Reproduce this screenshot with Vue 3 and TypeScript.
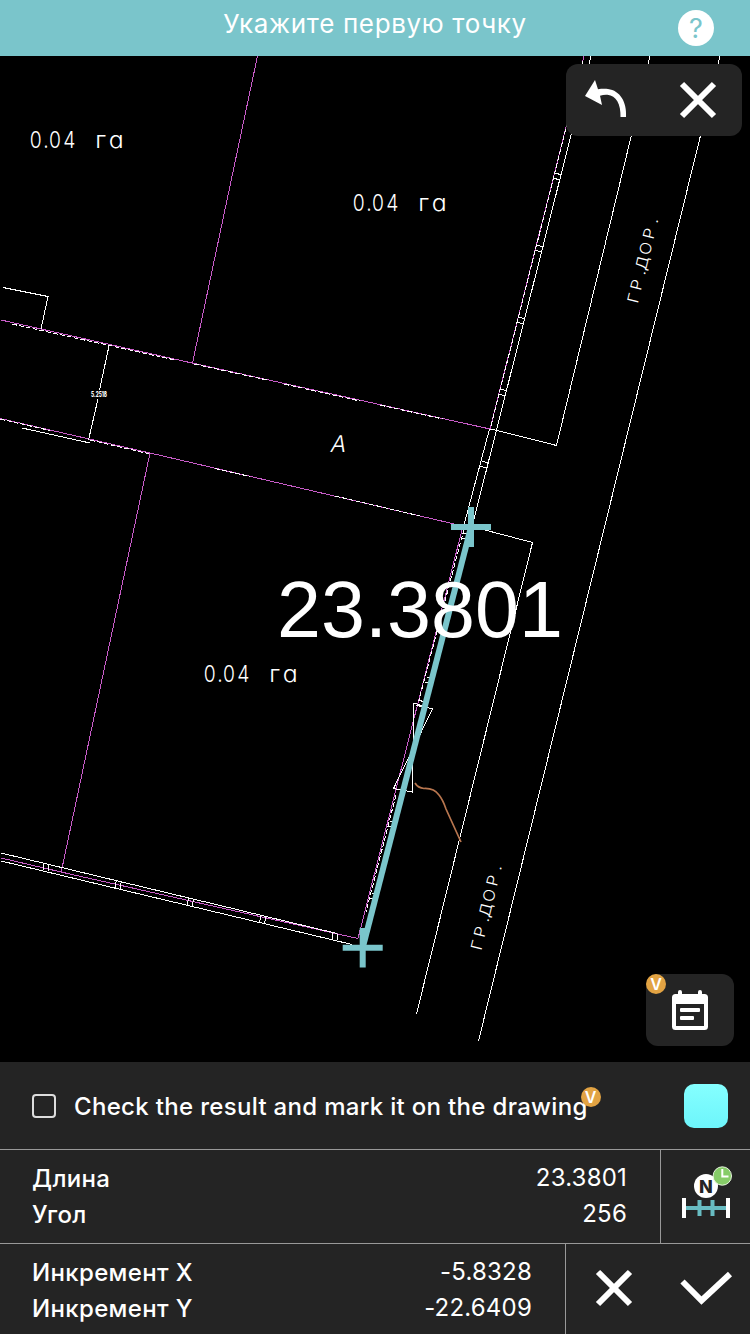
<template>
  <div class="screen">
    <header class="hint">
      <span class="hint-text">Укажите первую точку</span>
      <button class="help">?</button>
    </header>

    <main class="canvas">
      <svg class="drawing" viewBox="0 56 750 1006" width="750" height="1006">
        <g class="plot">
          <polyline v-for="(l, i) in parcelLines" :key="'p' + i" :points="l" />
        </g>
        <g class="white">
          <polyline v-for="(l, i) in whiteLines" :key="'w' + i" :points="l" />
          <path v-for="(p, i) in roadPosts" :key="'r' + i" :d="`M${p.x} ${p.y}l7 2M${p.x - 2} ${p.y + 5}l7 2`" />
          <path v-for="(p, i) in fencePosts" :key="'f' + i" :d="`M${p.x} ${p.y}l-1 7M${p.x + 5} ${p.y + 1}l-1 7`" />
        </g>
        <g class="dashed">
          <polyline v-for="(l, i) in dashedLines" :key="'d' + i" :points="l" />
        </g>
        <path class="slope" d="M415 783Q418 788 424 788.500Q434 788 439 795Q443 800 446 809L461 842" />

        <g class="cad">
          <g v-for="(a, i) in areas" :key="'a' + i" :transform="`translate(${a.x} ${a.y})`">
            <text transform="scale(.84 1)" x="-1.500 14.500 21.500 38.500">0.04</text>
            <text transform="scale(1.080 1)" x="59.500 72">га</text>
          </g>
          <text transform="translate(329.500 451.500) skewX(-12)">А</text>
          <text v-for="(r, i) in roads" :key="'g' + i" class="road" :transform="`translate(${r.x} ${r.y}) rotate(-76.300) scale(1.100 1)`" x="-1 11 25.500 30 44 59 74">ГР.ДОР.</text>
        </g>
        <text class="dim" x="91" y="396.500" textLength="16" lengthAdjust="spacingAndGlyphs">5.2518</text>

        <g class="measure">
          <path d="M471 527L362.700 947.700" />
          <path d="M451 527H491M471 507V547" />
          <path d="M342.700 947.700H382.700M362.700 928V967.500" />
        </g>
        <text class="length" x="277" y="636.500" textLength="286">{{ length }}</text>
      </svg>

      <div class="tools">
        <button>
          <svg width="44" height="44" viewBox="0 0 44 44">
            <path class="solid" d="M1 18L11 2L14 11.300C17 10.800 21 10.700 24 11C36 12.500 43 24 42 39H36.500C37 26 32 17.500 23.500 16.700C21 16.500 18.500 16.800 16 17.700L18 27Z" />
          </svg>
        </button>
        <button>
          <svg width="44" height="44" viewBox="0 0 44 44">
            <path class="stroke" d="M6 6L38 38M38 6L6 38" />
          </svg>
        </button>
      </div>

      <button class="notes">
        <svg width="40" height="44" viewBox="0 0 40 44">
          <path class="solid" fill-rule="evenodd" d="M8 4Q8 2 10 2T12 4V6H28V4Q28 2 30 2T32 4V6H34.500Q38 6 38 9.500V38.500Q38 42 34.500 42H5.500Q2 42 2 38.500V9.500Q2 6 5.500 6H8ZM6 16V38H34V16Z" />
          <rect class="solid" x="10" y="20" width="20" height="4" rx="1" />
          <rect class="solid" x="10" y="28" width="14" height="4" rx="1" />
        </svg>
        <span class="badge">V</span>
      </button>
    </main>

    <footer class="panel">
      <div class="row check-row">
        <label class="check">
          <span class="box" :class="{ on: markResult }" @click="markResult = !markResult"></span>
          <span class="check-text">Check the result and mark it on the drawing<i class="badge">V</i></span>
        </label>
        <span class="swatch"></span>
      </div>

      <div class="row">
        <dl class="values">
          <div v-for="v in polar" :key="v.name"><dt>{{ v.name }}</dt><dd>{{ v.value }}</dd></div>
        </dl>
        <button class="divide">
          <svg width="56" height="60" viewBox="678 1162 56 60">
            <path class="teal" d="M686 1208H726M699.500 1200V1216M712.500 1200V1216" />
            <path class="ends" d="M684 1198V1218M728 1198V1218" />
            <circle class="solid" cx="706" cy="1186" r="12" />
            <text class="n" x="706" y="1192.500" text-anchor="middle">N</text>
            <circle class="clock" cx="722.300" cy="1176" r="9.200" />
            <path class="hands" d="M722.300 1169V1176.500H728.500" />
          </svg>
        </button>
      </div>

      <div class="row last">
        <dl class="values">
          <div v-for="v in increments" :key="v.name"><dt>{{ v.name }}</dt><dd>{{ v.value }}</dd></div>
        </dl>
        <div class="confirm">
          <button>
            <svg width="44" height="44" viewBox="0 0 44 44">
              <path class="stroke" d="M6 6L38 38M38 6L6 38" />
            </svg>
          </button>
          <button>
            <svg width="56" height="44" viewBox="0 0 56 44">
              <path class="stroke" d="M4.500 15.500L23.500 34.500L52 8" />
            </svg>
          </button>
        </div>
      </div>
    </footer>
  </div>
</template>

<script setup lang="ts">
import { ref } from 'vue'

interface Point { x: number; y: number }
interface Value { name: string; value: string }

const length = ref('23.3801')
const markResult = ref(false)

const polar = ref<Value[]>([
  { name: 'Длина', value: '23.3801' },
  { name: 'Угол', value: '256' },
])
const increments = ref<Value[]>([
  { name: 'Инкремент X', value: '-5.8328' },
  { name: 'Инкремент Y', value: '-22.6409' },
])

// parcel borders
const parcelLines: string[] = [
  '257.5,56 192.5,363',
  '1,320 192,363 490,429 584,56',
  '0,418.5 150,453 463,526 358,938.5 61,872 1,858',
  '150,453 61,873',
]

const whiteLines: string[] = [
  '3,287.5 48,296.5 41,329',
  '109,346 99.500,390',
  '98,399 88.500,440',
  '22,428 90,443',
  '591,56 496.500,430 474,519',
  '489.500,429 464,525',
  '490,429 497,430.500 556.500,445.500 631,137 650,56',
  '720,56 478.500,1041',
  '462,524 532.500,542.500 416.500,1014',
  '413.500,703 432.500,709 393.500,788.500 412.500,792 413.500,703',
  '1,853 337,933.500',
  '1,861 352,944.500',
]

// borders where the white fence shows through the parcel line
const dashedLines: string[] = [
  '12,324 175,360',
  '194,364 267,380',
  '0,419 50,430.500',
  '90,440 150,454',
  '284,384 360,401',
  '380,405 443,419',
  '215,468.500 250,476.500',
  '335,496 420,516',
  '583,61 490.500,428',
  '464,529 419,700',
  '396,795 366,912',
]

const roadPosts: Point[] = [0, 1, 2, 3, 4, 5, 7, 9, 10].map((n) => ({ x: 555 - n * 18.3, y: 173 + n * 72 }))
roadPosts.push({ x: 418, y: 700 })
const fencePosts: Point[] = [0, 1, 2, 3, 4].map((n) => ({ x: 44 + n * 72.2, y: 863.5 + n * 17.4 }))

const areas: Point[] = [{ x: 31, y: 148 }, { x: 354, y: 211 }, { x: 205, y: 682 }]
const roads: Point[] = [{ x: 638, y: 303 }, { x: 481.5, y: 950 }]
</script>

<style>
body {
  background: #000;
}
</style>

<style scoped>
.screen {
  width: 750px;
  height: 1334px;
  display: flex;
  flex-direction: column;
  overflow: hidden;
  background: #000;
  color: #fff;
  font-family: Inter, "Noto Sans", sans-serif;
}
button {
  border: 0;
  padding: 0;
  background: none;
  color: inherit;
  font: inherit;
  display: flex;
  align-items: center;
  justify-content: center;
}
svg {
  display: block;
}
.hint {
  height: 56px;
  flex: none;
  display: grid;
  grid-template-columns: 1fr auto 1fr;
  background: #7ac5cb;
}
.hint-text {
  grid-column: 2;
  font-size: 26px;
  line-height: 48px;
  letter-spacing: 0.65px;
}
.help {
  width: 36px;
  height: 36px;
  margin: 10px 36px 0 0;
  justify-self: end;
  border-radius: 50%;
  background: #fff;
  color: #7ac5cb;
  font-size: 27px;
}
.canvas {
  height: 1006px;
  flex: none;
  position: relative;
}
.drawing polyline,
.drawing path {
  fill: none;
  stroke-width: 1;
}
.plot,
.white,
.dashed {
  shape-rendering: crispEdges;
}
.plot {
  stroke: #c85cc8;
}
.white {
  stroke: #fff;
}
.dashed {
  stroke: #fff;
  stroke-dasharray: 5 2;
}
.slope {
  stroke: #b8764f;
}
.drawing .slope {
  stroke-width: 1.7;
}
.cad {
  fill: #fff;
  font-size: 23px;
  font-weight: 300;
  font-feature-settings: "cv11";
}
.road {
  font-size: 15.5px;
}
.dim {
  fill: #fff;
  font-size: 7px;
  font-weight: 800;
}
.measure {
  stroke: #7ac5cb;
}
.drawing .measure path {
  stroke-width: 6;
}
.length {
  fill: #fff;
  font-family: "Liberation Sans", Arial, sans-serif;
  font-size: 79px;
}
.tools {
  position: absolute;
  top: 8px;
  right: 8px;
  width: 176px;
  height: 72px;
  padding: 0 22px 0 18px;
  box-sizing: border-box;
  display: flex;
  justify-content: space-between;
  border-radius: 12px;
  background: #242424;
}
.notes {
  position: absolute;
  right: 16px;
  bottom: 16px;
  width: 88px;
  height: 72px;
  border-radius: 12px;
  background: #242424;
}
.solid {
  fill: #fff;
}
.drawing ~ .notes svg {
  margin-top: -1px;
}
.stroke {
  fill: none;
  stroke: #fff;
  stroke-width: 6;
}
.badge {
  position: absolute;
  top: 0;
  left: 0;
  width: 20px;
  height: 20px;
  border-radius: 50%;
  background: #e2a343;
  font-size: 16px;
  font-style: normal;
  font-weight: 600;
  line-height: 20px;
  letter-spacing: 0;
  text-align: center;
}
.panel {
  flex: 1;
  background: #242424;
}
.row {
  height: 93px;
  display: flex;
  border-bottom: 1px solid #999;
}
.row.last {
  height: 90px;
  border-bottom: 0;
}
.check-row {
  height: 87px;
  padding: 0 22px 0 32px;
  align-items: center;
  justify-content: space-between;
}
.check {
  display: flex;
  align-items: center;
  gap: 18px;
}
.box {
  width: 24px;
  height: 24px;
  box-sizing: border-box;
  border: 2px solid #ddd;
  border-radius: 4px;
}
.box.on {
  background: #7ac5cb;
}
.check-text {
  position: relative;
  padding-top: 2px;
  font-size: 24px;
  font-weight: 500;
  letter-spacing: 0.32px;
  white-space: nowrap;
}
.check-text .badge {
  top: -3px;
  left: auto;
  right: -13px;
}
.swatch {
  width: 44px;
  height: 44px;
  border-radius: 10px;
  background: linear-gradient(#85ffff, #6df5fb);
}
.values {
  flex: 1;
  margin: 0;
  padding: 10px 33px 0 32px;
  font-size: 24px;
  line-height: 36px;
}
.values div {
  display: flex;
  justify-content: space-between;
}
dt {
  padding-top: 1px;
  height: 35px;
  font-weight: 500;
  letter-spacing: 0.35px;
}
dd {
  margin: 0;
  letter-spacing: 0.2px;
}
.divide {
  width: 90px;
  padding-bottom: 10px;
  border-left: 1px solid #999;
}
.teal,
.ends,
.hands {
  fill: none;
  stroke-width: 4;
}
.teal {
  stroke: #68bcc2;
}
.ends {
  stroke: #fff;
}
.n {
  fill: #242424;
  font-size: 18px;
  font-weight: 800;
}
.clock {
  fill: #86cc68;
  stroke: #e8f5df;
  stroke-width: 1;
}
.hands {
  stroke: #fff;
  stroke-width: 2;
}
.confirm {
  width: 185px;
  padding: 0 16px 2px 26px;
  box-sizing: border-box;
  display: flex;
  justify-content: space-between;
  border-left: 1px solid #999;
}
</style>
